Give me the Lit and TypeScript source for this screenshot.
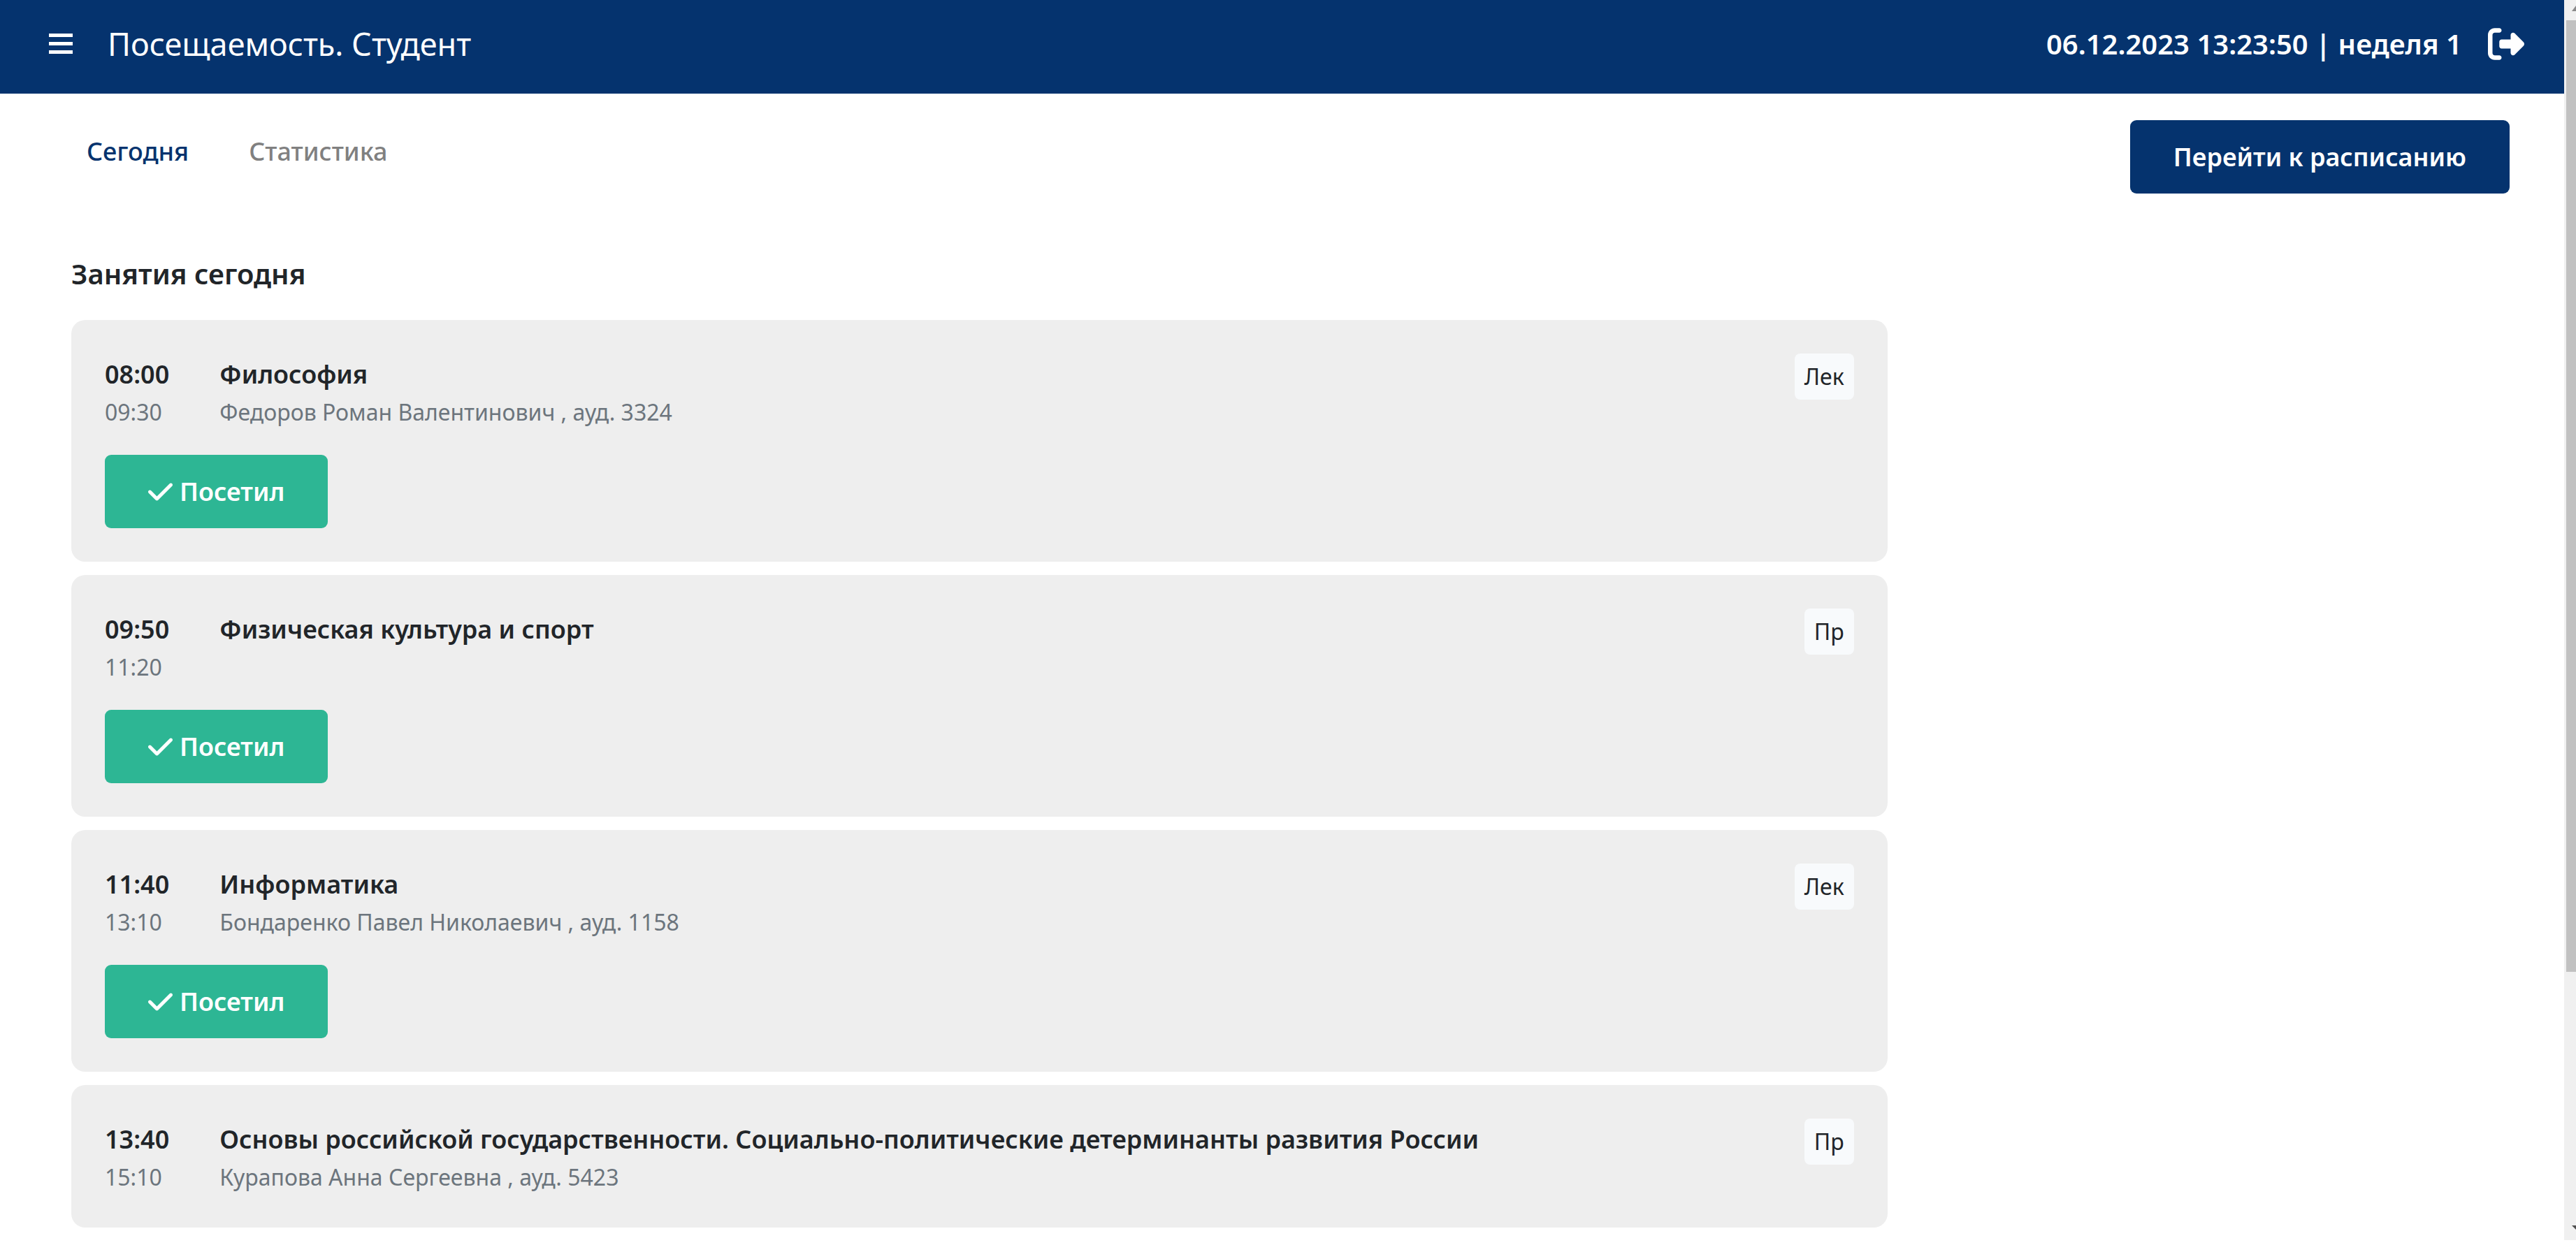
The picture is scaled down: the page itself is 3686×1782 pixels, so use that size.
import { LitElement, html, css, svg, nothing } from "lit";
import { customElement, property } from "lit/decorators.js";

interface Lesson {
  start: string;
  end: string;
  title: string;
  details: string;
  kind: string;
  visited: boolean;
}

const LESSONS: Lesson[] = [
  { start: "08:00", end: "09:30", title: "Философия", details: "Федоров Роман Валентинович , ауд. 3324", kind: "Лек", visited: true },
  { start: "09:50", end: "11:20", title: "Физическая культура и спорт", details: "", kind: "Пр", visited: true },
  { start: "11:40", end: "13:10", title: "Информатика", details: "Бондаренко Павел Николаевич , ауд. 1158", kind: "Лек", visited: true },
  { start: "13:40", end: "15:10", title: "Основы российской государственности. Социально-политические детерминанты развития России", details: "Курапова Анна Сергеевна , ауд. 5423", kind: "Пр", visited: false },
];

const menuPath = svg`<path d="M0 0h34v5H0zM0 12h34v5H0zM0 24h34v5H0z"/>`;
const exitPath = svg`<path d="M377.9 105.9L500.7 228.7c7.2 7.2 11.3 17.1 11.3 27.3s-4.1 20.1-11.3 27.3L377.9 406.1c-6.4 6.4-15 9.9-24 9.9c-18.7 0-33.9-15.2-33.9-33.9l0-62.1-128 0c-17.7 0-32-14.3-32-32l0-64c0-17.7 14.3-32 32-32l128 0 0-62.1c0-18.7 15.2-33.9 33.9-33.9c9 0 17.6 3.6 24 9.9zM160 96L96 96c-17.7 0-32 14.3-32 32l0 256c0 17.7 14.3 32 32 32l64 0c17.7 0 32 14.3 32 32s-14.3 32-32 32l-64 0c-53 0-96-43-96-96L0 128C0 75 43 32 96 32l64 0c17.7 0 32 14.3 32 32s-14.3 32-32 32z"/>`;
const checkPath = svg`<path d="M438.6 105.4c12.5 12.5 12.5 32.8 0 45.3l-256 256c-12.5 12.5-32.8 12.5-45.3 0l-128-128c-12.5-12.5-12.5-32.8 0-45.3s32.8-12.5 45.3 0L160 338.7 393.4 105.4c12.5-12.5 32.8-12.5 45.3 0z"/>`;

@customElement("lesson-card")
export class LessonCard extends LitElement {
  @property({ attribute: false }) lesson!: Lesson;

  static styles = css`
    :host {
      display: block;
      box-sizing: border-box;
      padding: 48px;
      border-radius: 20px;
      background: #eeeeee;
    }
    .head {
      display: flex;
      align-items: flex-start;
      gap: 72px;
    }
    .col {
      padding-top: 4px;
      margin-bottom: -4px;
    }
    .grow {
      flex: 1;
    }
    .strong {
      margin: 0;
      font-size: 36px;
      font-weight: 600;
      line-height: 52px;
      color: #212529;
    }
    .muted {
      min-height: 56px;
      font-size: 32px;
      line-height: 56px;
      color: #6c757d;
    }
    .badge {
      padding: 0 14px;
      border-radius: 8px;
      background: #f8fafc;
      font-size: 32px;
      line-height: 66px;
      color: #212529;
    }
    .visit {
      display: flex;
      align-items: center;
      gap: 10px;
      height: 105px;
      margin-top: 37px;
      padding: 0 62px;
      border: 0;
      border-radius: 9px;
      background: #2db694;
      color: #ffffff;
      font: inherit;
      font-size: 36px;
      font-weight: 600;
    }
    .check {
      width: 35px;
      height: 40px;
      fill: currentColor;
    }
  `;

  render() {
    const l = this.lesson;
    return html`
      <div class="head">
        <div class="col">
          <div class="strong">${l.start}</div>
          <div class="muted">${l.end}</div>
        </div>
        <div class="col grow">
          <h3 class="strong">${l.title}</h3>
          <div class="muted">${l.details}</div>
        </div>
        <span class="badge">${l.kind}</span>
      </div>
      ${l.visited
        ? html`<button class="visit" type="button">
            <svg class="check" viewBox="0 0 448 512" aria-hidden="true">${checkPath}</svg>
            <span>Посетил</span>
          </button>`
        : nothing}
    `;
  }
}

@customElement("app-root")
export class AppRoot extends LitElement {
  static styles = css`
    :host {
      display: flex;
      align-items: stretch;
      min-height: 100vh;
      background: #ffffff;
      color: #212529;
      font-family: "Noto Sans", "Open Sans", sans-serif;
    }
    .page {
      flex: 1;
      min-width: 0;
    }
    .bar {
      display: flex;
      align-items: center;
      box-sizing: border-box;
      height: 134px;
      padding: 0 57px 9px 70px;
      background: #05336e;
      color: #ffffff;
    }
    .icon-button {
      display: flex;
      padding: 0;
      border: 0;
      background: none;
      color: inherit;
    }
    .menu {
      width: 34px;
      height: 29px;
      fill: currentColor;
    }
    .exit {
      width: 52px;
      height: 52px;
      fill: currentColor;
    }
    .brand {
      margin: 0 0 0 50px;
      font-size: 45px;
      font-weight: 400;
    }
    .clock {
      margin: 0 37px 0 auto;
      font-size: 40px;
      font-weight: 600;
    }
    .toolbar {
      display: flex;
      align-items: flex-start;
      justify-content: space-between;
      padding: 38px 78px 0 124px;
    }
    .tabs {
      display: flex;
      gap: 86px;
      padding-top: 18px;
      font-size: 36px;
      font-weight: 500;
      line-height: 54px;
    }
    .tab {
      color: #808080;
      text-decoration: none;
    }
    .active {
      color: #05336e;
    }
    .schedule {
      height: 105px;
      padding: 0 62px;
      border: 0;
      border-radius: 9px;
      background: #05336e;
      color: #ffffff;
      font: inherit;
      font-size: 36px;
      font-weight: 600;
    }
    .content {
      display: grid;
      grid-template-columns: 3fr 1fr;
      gap: 24px;
      padding: 83px 78px 0 102px;
    }
    .heading {
      margin: 0 0 34px;
      font-size: 40px;
      font-weight: 600;
      line-height: 64px;
    }
    .list {
      display: flex;
      flex-direction: column;
      gap: 19px;
    }
    .scroll {
      display: flex;
      flex-direction: column;
      align-items: flex-end;
      width: 17px;
      margin-bottom: 7px;
      background: #f0f0f0;
    }
    .arrow {
      width: 6px;
      height: 29px;
    }
    .track {
      flex: 1;
      width: 14px;
    }
    .thumb {
      height: 79.3%;
      background: #c1c1c1;
    }
  `;

  render() {
    return html`
      <div class="page">
        <header class="bar">
          <button class="icon-button" type="button" aria-label="Меню">
            <svg class="menu" viewBox="0 0 34 29">${menuPath}</svg>
          </button>
          <h1 class="brand">Посещаемость. Студент</h1>
          <span class="clock">06.12.2023 13:23:50 | неделя 1</span>
          <button class="icon-button" type="button" aria-label="Выйти">
            <svg class="exit" viewBox="0 0 512 512">${exitPath}</svg>
          </button>
        </header>
        <div class="toolbar">
          <nav class="tabs">
            <a class="tab active" href="#today">Сегодня</a>
            <a class="tab" href="#stats">Статистика</a>
          </nav>
          <button class="schedule" type="button">Перейти к расписанию</button>
        </div>
        <main class="content">
          <section>
            <h2 class="heading">Занятия сегодня</h2>
            <div class="list">
              ${LESSONS.map((l) => html`<lesson-card .lesson=${l}></lesson-card>`)}
            </div>
          </section>
        </main>
      </div>
      <div class="scroll" aria-hidden="true">
        <svg class="arrow" viewBox="0 0 6 29"><path fill="#8a8a8a" d="M0 16L6 8V16z" /></svg>
        <div class="track"><div class="thumb"></div></div>
        <svg class="arrow" viewBox="0 0 6 29"><path fill="#505050" d="M0 8H6V14z" /></svg>
      </div>
    `;
  }
}
